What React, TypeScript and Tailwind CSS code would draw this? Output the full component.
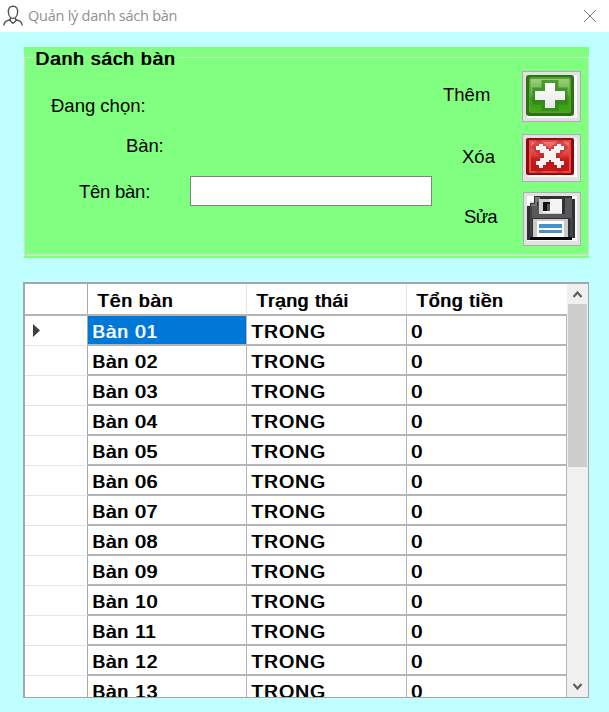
import React from "react";

const rows = ["01", "02", "03", "04", "05", "06", "07", "08", "09", "10", "11", "12", "13"];

function UserIcon() {
  return (
    <svg width="20" height="22" viewBox="0 0 20 22" fill="none" stroke="#555" strokeWidth="1.4">
      <path d="M10 1.2C6.5 1.2 5.200 3.700 5.400 7c.2 3.300 2 6.400 4.600 6.400S14.400 10.300 14.600 7C14.800 3.700 13.500 1.200 10 1.200Z" />
      <path d="M7.500 12.500v2L3.200 16.200C1.600 17 1 18.200.8 20.500M12.500 12.500v2l4.300 1.700c1.600.8 2.200 2 2.400 4.300M6.500 15.200 10 18.300l3.500-3.100" />
    </svg>
  );
}

function AddIcon() {
  return (
    <svg width="57" height="49" viewBox="0 0 57 49">
      <defs>
        <linearGradient id="green" x1="0" y1="0" x2="0" y2="1">
          <stop offset="0" stopColor="#9ad278" />
          <stop offset="0.45" stopColor="#62b043" />
          <stop offset="0.6" stopColor="#3a9a16" />
          <stop offset="1" stopColor="#43a61a" />
        </linearGradient>
        <linearGradient id="plus" x1="0" y1="0" x2="0" y2="1">
          <stop offset="0" stopColor="#fff" />
          <stop offset="1" stopColor="#e6e6e6" />
        </linearGradient>
      </defs>
      <path d="M4 43h47V3h3v43H4z" fill="#fafafa" />
      <rect x="3" y="3" width="48" height="41" rx="3" fill="#2c7313" />
      <rect x="6" y="5" width="42" height="36" rx="2" fill="#57a033" />
      <rect x="7.500" y="7" width="39" height="33" rx="1" fill="url(#green)" />
      <path d="M18.500 8h17v7.500h9v17h-9V39h-17v-6.500h-9v-17h9z" fill="#2e8017" opacity=".65" />
      <path d="M22 11h10v8h10v9H32v8H22v-8H12v-9h10z" fill="url(#plus)" />
    </svg>
  );
}

function DeleteIcon() {
  return (
    <svg width="57" height="46" viewBox="0 0 57 46">
      <defs>
        <linearGradient id="red" x1="0" y1="0" x2="0" y2="1">
          <stop offset="0" stopColor="#ed7777" />
          <stop offset="0.45" stopColor="#da3c3c" />
          <stop offset="0.6" stopColor="#c81b1b" />
          <stop offset="1" stopColor="#c91515" />
        </linearGradient>
      </defs>
      <path d="M4 39h47V3h3v39H4z" fill="#fafafa" />
      <rect x="3" y="3" width="48" height="37" rx="2" fill="#980606" />
      <rect x="6" y="5" width="42" height="33" fill="#dd4d4d" />
      <rect x="8" y="7" width="38" height="29" fill="url(#red)" />
      <path d="m16 12 21 19.500M37 12 16 31.500" stroke="#ad1717" strokeWidth="12" strokeLinecap="square" opacity=".4" />
      <g fill="#f5f3f3" shapeRendering="crispEdges">
        <path d="M16 9h4v2h3v3h3v2h2v-2h3v-3h3V9h4v2h3v4h-4v3h-4v5h4v3h4v4h-3v3h-4v-3h-3v-3h-3v-2h-2v2h-3v3h-3v3h-4v-3h-3v-4h4v-3h4v-5h-4v-3h-4v-4h3z" />
      </g>
    </svg>
  );
}

function SaveIcon() {
  return (
    <svg width="56" height="52" viewBox="0 0 56 52" shapeRendering="crispEdges">
      <path d="M3 3h7v5H6v4H3z" fill="#fff" />
      <path d="M48 3h5v45H3v-3h45z" fill="#f8f8f8" />
      <path d="M10 3h38v3h3v39h-3v2H3V13h3v-3h4z" fill="#303032" />
      <path d="M11 4h5v5h-3v5H7v-3h4z" fill="#77777a" />
      <path d="M7 13h7V8h2v13h25V5h7v20H7z" fill="#58585b" />
      <path d="M6 14h2v31H6zM46 25h3v20h-3z" fill="#434345" />
      <path d="M6 44h42v3H6z" fill="#080808" />
      <rect x="15" y="6" width="23" height="15" fill="#d1d1d1" />
      <path d="M26 6h12v14H19v-6h7z" fill="#f4f4f4" />
      <path d="M19 9h7v9h-7z" fill="#111" />
      <path d="M23 11h3v7h-3z" fill="#555" />
      <rect x="9" y="26" width="35" height="18" fill="#c9c9ca" />
      <rect x="13" y="28" width="27" height="16" fill="#fff" />
      <path d="M15 31h23v4H15zM15 37h23v3H15z" fill="#4793c5" />
    </svg>
  );
}

function Label({ text, className }: { text: string; className: string }) {
  return <div className={`h-6 whitespace-nowrap text-[18.500px] leading-6 ${className}`}>{text}</div>;
}

function GroupBox() {
  return (
    <section className="ml-6 h-[211px] w-[565px] bg-[#80ff80]">
      <div className="flex h-6 items-start">
        <div className="mt-[10px] h-px w-[9px] bg-[#cde5cd]" />
        <div className="w-[146px] whitespace-nowrap pl-[2px] text-[19px] leading-6 tracking-[0.950px] [text-shadow:1px_0_0_currentColor]">Danh sách bàn</div>
        <div className="mt-[10px] h-px flex-1 bg-[#cde5cd]" />
      </div>
      <div className="-mt-[14px] flex h-[199px] border-x border-b-2 border-[#c8e5c8]">
        <div className="w-[418px] pt-[37px]">
          <Label text="Đang chọn:" className="ml-[26px]" />
          <Label text="Bàn:" className="ml-[101px] mt-4 tracking-[-0.100px]" />
          <div className="mt-[18px] flex">
            <Label text="Tên bàn:" className="ml-[54px] mt-1 w-[111px] tracking-[-0.250px]" />
            <input aria-label="Tên bàn" className="h-[30px] w-[242px] border border-[#788878] bg-white outline-none" />
          </div>
        </div>
        <div className="w-[79px] pt-[26px]">
          <Label text="Thêm" className="" />
          <Label text="Xóa" className="ml-[19px] mt-[38px]" />
          <Label text="Sửa" className="ml-[21px] mt-9 tracking-[-0.700px]" />
        </div>
        <div className="pt-[14px]">
          <button aria-label="Thêm" className="block h-[51px] w-[59px] border border-[#adadad] bg-[#e1e1e1]"><AddIcon /></button>
          <button aria-label="Xóa" className="mt-3 block h-12 w-[59px] border border-[#adadad] bg-[#e1e1e1]"><DeleteIcon /></button>
          <button aria-label="Sửa" className="ml-px mt-[10px] block h-[54px] w-[58px] border border-[#adadad] bg-[#e1e1e1]"><SaveIcon /></button>
        </div>
      </div>
    </section>
  );
}

function TableGrid() {
  return (
    <section className="ml-[23px] mt-6 flex h-[416px] w-[566px] overflow-hidden border border-l-2 border-t-2 border-[#a6a6a6] bg-white">
      <div className="w-[542px] text-[19px] tracking-[0.900px] [text-shadow:1px_0_0_currentColor]">
        <div className="grid h-8 grid-cols-[63px_159px_160px_160px] grid-rows-[30px] border-b-2 border-[#b5b5b5] leading-[33px]">
          <div className="border-r border-[#a8a8a8]" />
          <div className="border-r border-[#e5e5e5] pl-[9px]">Tên bàn</div>
          <div className="border-r border-[#e5e5e5] pl-[9px] tracking-[0.750px]">Trạng thái</div>
          <div className="pl-[9px]">Tổng tiền</div>
        </div>
        {rows.map((row, i) => (
          <div key={row} className="grid h-[30px] grid-cols-[63px_159px_160px_160px] grid-rows-[30px] leading-[32px]">
            <div className="flex items-center border-b border-r border-b-[#e5e5e5] border-r-[#a8a8a8] pl-2">
              {i === 0 && <svg width="7" height="13" viewBox="0 0 7 13"><path d="M0 0 7 6.500 0 13z" fill="#404040" /></svg>}
            </div>
            <div className={`border-b-2 border-r border-[#b5b5b5] pl-1 ${i === 0 ? "bg-[#0078d7] text-white [text-shadow:1px_0_0_#ffffffc0]" : ""}`}>Bàn {row}</div>
            <div className="border-b-2 border-r border-[#b5b5b5] pl-1 tracking-[1.200px]">TRONG</div>
            <div className="border-b-2 border-r border-[#b5b5b5] pl-1">0</div>
          </div>
        ))}
      </div>
      <div className="flex w-[21px] flex-col items-center bg-[#f0f0f0]">
        <svg width="21" height="20" viewBox="0 0 21 20" fill="none" stroke="#606060" strokeWidth="2.200"><path d="m6.500 13 4-4.500 4 4.500" /></svg>
        <div className="h-[163px] w-[19px] bg-[#cdcdcd]" />
        <svg className="mt-auto" width="21" height="20" viewBox="0 0 21 20" fill="none" stroke="#606060" strokeWidth="2.200"><path d="m6.500 7 4 4.500 4-4.500" /></svg>
      </div>
    </section>
  );
}

export default function App() {
  return (
    <main className="h-[712px] w-[609px] overflow-hidden bg-[#c0ffff] font-['Liberation_Sans',Arial,sans-serif] text-black">
      <header className="mb-[15px] flex h-8 items-center bg-white pl-[3px] pr-[13px]">
        <UserIcon />
        <span className="ml-[5px] whitespace-nowrap font-['Open_Sans',sans-serif] text-[14.500px] tracking-[-0.250px] text-[#909090]">Quản lý danh sách bàn</span>
        <svg className="ml-auto" width="12" height="12" viewBox="0 0 12 12" stroke="#777" strokeWidth="1"><path d="m0 0 12 12M12 0 0 12" /></svg>
      </header>
      <GroupBox />
      <TableGrid />
    </main>
  );
}
